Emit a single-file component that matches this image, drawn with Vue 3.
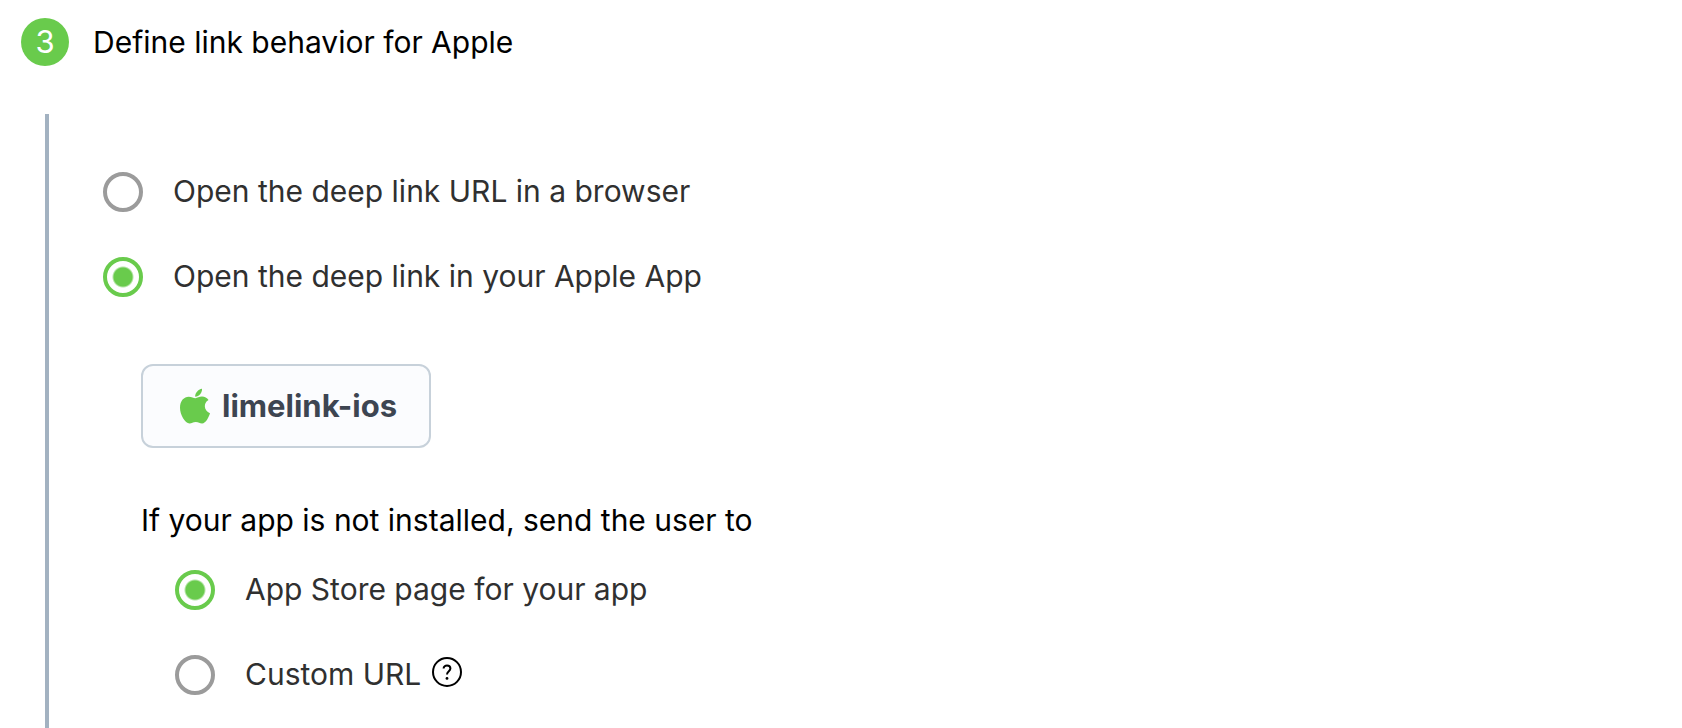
<template>
  <section class="step">
    <header class="step-header">
      <span class="step-number">3</span>
      <h2 class="step-title">Define link behavior for Apple</h2>
    </header>

    <div class="step-body">
      <div class="options" role="radiogroup" aria-label="Link behavior">
        <div v-for="item in behaviors" :key="item.value" class="option">
          <input
            :id="item.value"
            v-model="behavior"
            type="radio"
            name="behavior"
            :value="item.value"
          />
          <label :for="item.value">{{ item.label }}</label>
        </div>
      </div>

      <div v-if="behavior === 'app'" class="app-settings">
        <button type="button" class="app-button">
          <svg class="apple" viewBox="0 0 30 36" aria-hidden="true">
            <path d="M22 .8C22.4 4.6 19 8.8 15.2 8.8C14.8 5.2 18.2 1.4 22 .8Z" />
            <path
              d="M15.4 10.2C17.3 10.2 19.2 8.6 22 8.6C24.7 8.6 27.1 9.8 28.5 12C23.1 14.9 23.8 22.9 30 25.2C28.9 28.7 25.9 35.4 22.1 35.4C19.6 35.4 18.7 34 15.8 34C12.8 34 11.9 35.4 9.5 35.4C5.1 35.4 0 26.8 0 19.7C0 12.8 4.1 8.8 8.7 8.8C11.6 8.8 13.6 10.2 15.4 10.2Z"
            />
          </svg>
          <span>limelink-ios</span>
        </button>

        <p class="hint">If your app is not installed, send the user to</p>

        <div class="options fallback" role="radiogroup" aria-label="Fallback">
          <div v-for="item in fallbacks" :key="item.value" class="option">
            <input
              :id="item.value"
              v-model="fallback"
              type="radio"
              name="fallback"
              :value="item.value"
            />
            <label :for="item.value">{{ item.label }}</label>
            <button v-if="item.help" type="button" class="help" aria-label="Help">
              <svg viewBox="0 0 30 30" aria-hidden="true">
                <circle cx="15" cy="15" r="14" />
                <path d="M11.6 11.6C11.6 7.4 18.4 7.5 18.4 11.6C18.4 14.2 15 14.2 15 17.4" />
                <circle class="dot" cx="15" cy="21.4" r="1.4" />
              </svg>
            </button>
          </div>
        </div>
      </div>
    </div>
  </section>
</template>

<script setup>
import { ref } from 'vue'

const behavior = ref('app')
const fallback = ref('store')

const behaviors = [
  { value: 'browser', label: 'Open the deep link URL in a browser' },
  { value: 'app', label: 'Open the deep link in your Apple App' },
]

const fallbacks = [
  { value: 'store', label: 'App Store page for your app' },
  { value: 'custom', label: 'Custom URL', help: true },
]
</script>

<style>
body {
  margin: 0;
  background: #fff;
}
</style>

<style scoped>
.step {
  display: flex;
  flex-direction: column;
  min-height: 100vh;
  box-sizing: border-box;
  padding-top: 18px;
  font-family: Inter, "Liberation Sans", sans-serif;
  font-size: 30px;
  line-height: 48px;
  color: #000;
}
.step-header {
  display: flex;
  align-items: center;
  gap: 24px;
  padding-left: 21px;
}
.step-number {
  width: 48px;
  height: 48px;
  border-radius: 50%;
  background: #69cb4c;
  color: #fff;
  font-size: 31px;
  text-align: center;
}
.step-title {
  margin: 0;
  font-size: inherit;
  font-weight: 400;
}
.step-body {
  flex: 1;
  margin: 48px 0 0 45px;
  padding: 54px 0 28px 54px;
  border-left: 4px solid #a3b2c1;
}
.options {
  display: flex;
  flex-direction: column;
  gap: 37px;
}
.option {
  display: flex;
  align-items: center;
  color: #303030;
}
.option input {
  appearance: none;
  box-sizing: border-box;
  flex: none;
  width: 40px;
  height: 40px;
  margin: 4px 30px 4px 0;
  border: 4px solid #9b9b9b;
  border-radius: 50%;
}
.option input:checked {
  border-color: #69cb4c;
  background: radial-gradient(circle, #69cb4c 9px, transparent 11px);
}
.option label {
  padding-bottom: 2px;
  line-height: 46px;
}
.app-settings {
  padding: 63px 0 0 38px;
}
.app-button {
  display: flex;
  align-items: center;
  gap: 12px;
  padding: 16px 32px 16px 37px;
  border: 2px solid #c7d1da;
  border-radius: 12px;
  background: #fbfcfe;
  color: #3d4551;
  font: inherit;
  font-size: 31px;
  font-weight: 700;
}
.apple {
  width: 30px;
  height: 36px;
  fill: #69cb4c;
}
.hint {
  margin: 48px 0 22px;
}
.fallback {
  padding-left: 34px;
}
.help {
  width: 30px;
  height: 30px;
  margin: 0 0 6px 11px;
  padding: 0;
  border: 0;
  background: none;
}
.help svg {
  display: block;
  fill: none;
  stroke: #000;
  stroke-width: 2;
}
.help .dot {
  fill: #000;
  stroke: none;
}
</style>
